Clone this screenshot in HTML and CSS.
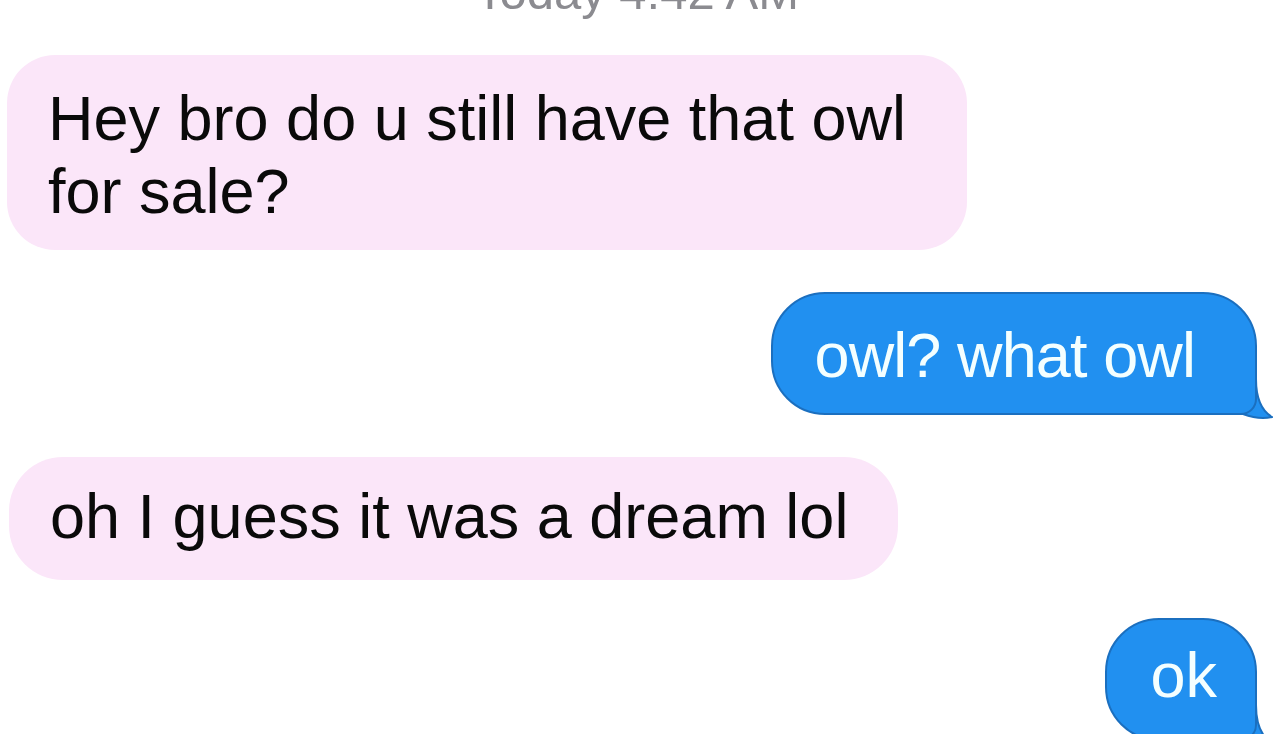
FILE: index.html
```html
<!DOCTYPE html>
<html lang="en">
<head>
<meta charset="utf-8">
<title>Messages</title>
<link rel="stylesheet" href="styles.css">
</head>
<body>
<main class="thread">
  <div class="stamp">Today 4:42 AM</div>
  <div class="bubble in first">Hey bro do u still have that owl for sale?</div>
  <div class="bubble out second">owl? what owl
    <svg class="tail" viewBox="0 0 48 40" width="48" height="40" aria-hidden="true"><path d="M0 0 H31 C31 20 37 32 47 38 C38 40 26 38 18 35 Q10 35 0 35 Z" fill="#2190f0"/><path d="M31 0 C31 20 37 32 47 38 C38 40 26 38 18 35 Q10 35 0 35" fill="none" stroke="#1b6fbf" stroke-width="2"/></svg>
  </div>
  <div class="bubble in third">oh I guess it was a dream lol</div>
  <div class="bubble out fourth">ok
    <svg class="tail" viewBox="0 0 48 40" width="48" height="40" aria-hidden="true"><path d="M0 0 H31 C31 20 37 32 47 38 C38 40 26 38 18 35 Q10 35 0 35 Z" fill="#2190f0"/><path d="M31 0 C31 20 37 32 47 38 C38 40 26 38 18 35 Q10 35 0 35" fill="none" stroke="#1b6fbf" stroke-width="2"/></svg>
  </div>
</main>
</body>
</html>
```
FILE: styles.css
```css
html {
  margin: 0;
  padding: 0;
  background: #ffffff;
  overflow: hidden;
}
body {
  margin: 0;
  padding: 0;
  width: 1280px;
  height: 734px;
  overflow: hidden;
  font-family: "Liberation Sans", Arial, sans-serif;
}
.thread {
  display: flex;
  flex-direction: column;
  align-items: flex-start;
}
.stamp {
  align-self: center;
  margin-top: -32px;
  font-size: 49px;
  line-height: 48px;
  color: #8b8b90;
  margin-left: -6px;
}
.bubble {
  position: relative;
  font-size: 63px;
  line-height: 73px;
  border-radius: 54px;
  box-sizing: border-box;
}
.in {
  background: #fbe6f9;
  color: #0a0a0a;
  margin-left: 7px;
}
.out {
  align-self: flex-end;
  margin-right: 23px;
  background: #2190f0;
  color: #f4ffff;
  border: 2px solid #1b6fbf;
  border-bottom-right-radius: 16px;
}
.first {
  margin-top: 39px;
  width: 960px;
  padding: 27px 39px 22px 41px;
  border-radius: 48px;
}
.second {
  margin-top: 42px;
  height: 123px;
  padding: 25px 60px 0 42px;
  letter-spacing: -0.9px;
}
.third {
  margin-top: 42px;
  height: 123px;
  padding: 23px 50px 0 41px;
  margin-left: 9px;
}
.fourth {
  margin-top: 38px;
  height: 123px;
  padding: 19px 38px 0 43px;
}
.tail {
  position: absolute;
  right: -18px;
  bottom: -6px;
  z-index: -1;
}
```
